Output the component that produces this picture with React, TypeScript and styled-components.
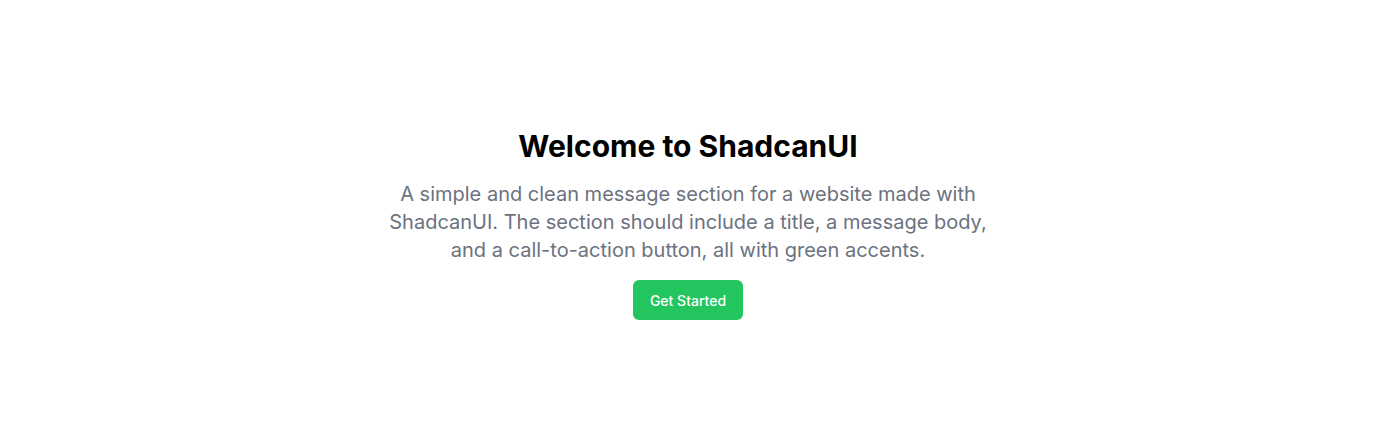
import React from 'react';
import styled, { createGlobalStyle } from 'styled-components';

const GlobalStyle = createGlobalStyle`
  html, body {
    margin: 0;
    padding: 0;
    background: #ffffff;
    font-family: Inter, 'Noto Sans', sans-serif;
  }
`;

const Page = styled.main`
  min-height: 448px;
  display: flex;
  align-items: center;
  justify-content: center;
  padding: 0 16px;
  box-sizing: border-box;
`;

const Section = styled.section`
  display: flex;
  flex-direction: column;
  align-items: center;
  text-align: center;
  max-width: 600px;
`;

const Title = styled.h1`
  margin: 0;
  font-size: 30px;
  line-height: 36px;
  font-weight: 700;
  color: #000000;
`;

const Message = styled.p`
  margin: 16px 0 0;
  font-size: 20px;
  line-height: 28px;
  color: #6b7280;
`;

const Action = styled.button`
  margin-top: 16px;
  height: 40px;
  padding: 0 17px;
  border: none;
  border-radius: 6px;
  background: #22c55e;
  color: #ffffff;
  font-family: Inter, 'Noto Sans', sans-serif;
  font-size: 14px;
  font-weight: 500;
  cursor: pointer;

  &:hover {
    background: #16a34a;
  }
`;

const App = () => {
  return (
    <>
      <GlobalStyle />
      <Page>
        <Section>
          <Title>Welcome to ShadcanUI</Title>
          <Message>
            A simple and clean message section for a website made with
            ShadcanUI. The section should include a title, a message body, and
            a call-to-action button, all with green accents.
          </Message>
          <Action>Get Started</Action>
        </Section>
      </Page>
    </>
  );
};

export default App;
